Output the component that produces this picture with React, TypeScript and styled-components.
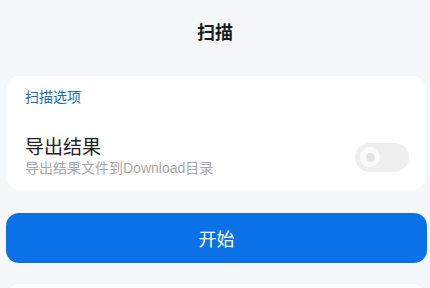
import React from "react";
import styled, { createGlobalStyle } from "styled-components";

const Global = createGlobalStyle`
  html, body { margin: 0; padding: 0; background: #f6f7f9; }
  body { font-family: "Liberation Sans", "Noto Sans CJK SC", sans-serif; }
`;

const Page = styled.div`
  width: 430px;
  height: 288px;
  overflow: hidden;
  display: flex;
  flex-direction: column;
  padding: 0 3px 0 6px;
  box-sizing: border-box;
  & > * { flex-shrink: 0; }
`;

const Header = styled.div`
  height: 62px;
  display: flex;
  align-items: center;
  justify-content: center;
  font-size: 18px;
  font-weight: 700;
  color: #1a1a1a;
  margin-right: -3px;
  margin-left: -6px;
`;

const Card = styled.div`
  margin-top: 14px;
  margin-right: 1px;
  background: #ffffff;
  border-radius: 14px;
  padding: 11px 19px 0 19px;
  height: 114px;
  box-sizing: border-box;
  display: flex;
  flex-direction: column;
`;

const SectionLabel = styled.div`
  font-size: 14px;
  color: #1f6cb3;
  line-height: 20px;
`;

const Row = styled.div`
  margin-top: 30px;
  display: flex;
  align-items: center;
  justify-content: space-between;
`;

const RowText = styled.div`
  display: flex;
  flex-direction: column;
`;

const RowTitle = styled.div`
  font-size: 19px;
  color: #222;
  line-height: 22px;
`;

const RowSub = styled.div`
  font-size: 14px;
  color: #a8a8a8;
  line-height: 18px;
`;

const Toggle = styled.div`
  width: 54px;
  height: 29px;
  border-radius: 15px;
  background: #efefef;
  display: flex;
  align-items: center;
  padding-left: 5px;
  box-sizing: border-box;
  margin-right: -2px;
`;

const Knob = styled.div`
  width: 20px;
  height: 20px;
  border-radius: 50%;
  background: #fafafa;
  display: flex;
  align-items: center;
  justify-content: center;
`;

const KnobDot = styled.div`
  width: 9px;
  height: 9px;
  border-radius: 50%;
  background: #e4e4e4;
`;

const StartButton = styled.button`
  margin-top: 23px;
  height: 50px;
  border: none;
  border-radius: 13px;
  background: #0a72e6;
  color: #ffffff;
  font-family: inherit;
  font-size: 18px;
  cursor: pointer;
`;

const NextCard = styled.div`
  margin-top: 21px;
  margin-right: 1px;
  height: 40px;
  background: #ffffff;
  border-radius: 14px;
`;

export default function App() {
  return (
    <>
      <Global />
      <Page>
        <Header>扫描</Header>
        <Card>
          <SectionLabel>扫描选项</SectionLabel>
          <Row>
            <RowText>
              <RowTitle>导出结果</RowTitle>
              <RowSub>导出结果文件到Download目录</RowSub>
            </RowText>
            <Toggle>
              <Knob>
                <KnobDot />
              </Knob>
            </Toggle>
          </Row>
        </Card>
        <StartButton>开始</StartButton>
        <NextCard />
      </Page>
    </>
  );
}
